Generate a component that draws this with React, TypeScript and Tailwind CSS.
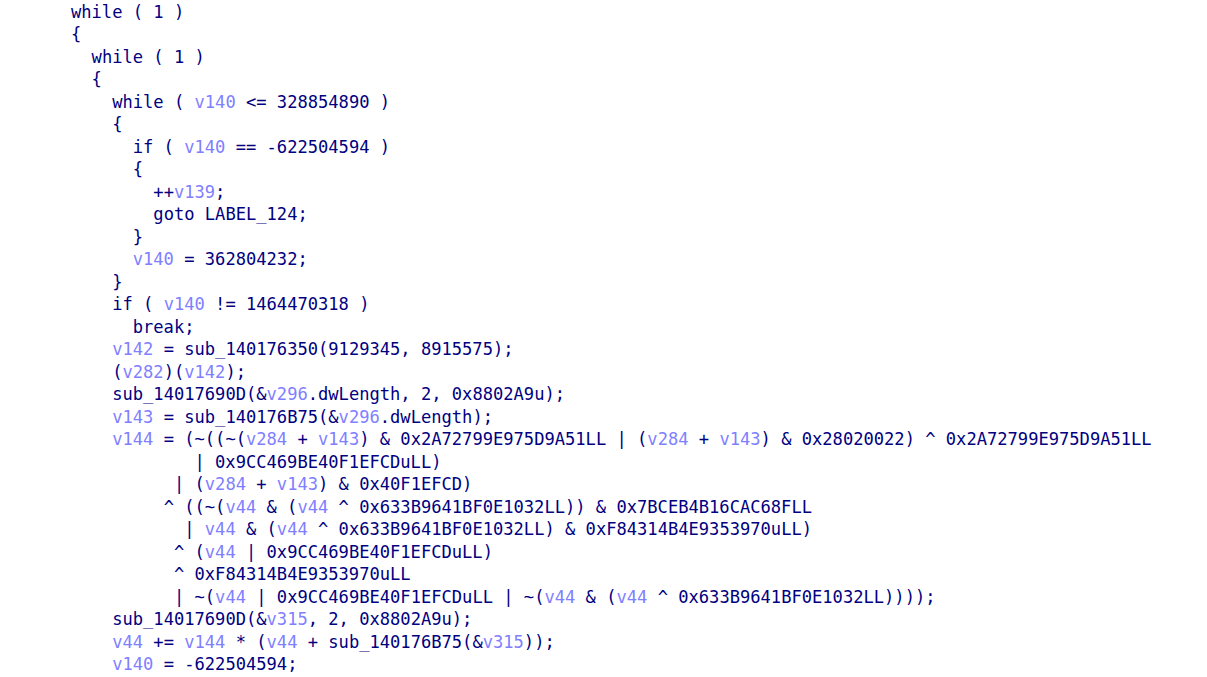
import React from "react";

// [indent columns, text]
const lines: [number, string][] = [
  [0, "while ( 1 )"],
  [0, "{"],
  [2, "while ( 1 )"],
  [2, "{"],
  [4, "while ( v140 <= 328854890 )"],
  [4, "{"],
  [6, "if ( v140 == -622504594 )"],
  [6, "{"],
  [8, "++v139;"],
  [8, "goto LABEL_124;"],
  [6, "}"],
  [6, "v140 = 362804232;"],
  [4, "}"],
  [4, "if ( v140 != 1464470318 )"],
  [6, "break;"],
  [4, "v142 = sub_140176350(9129345, 8915575);"],
  [4, "(v282)(v142);"],
  [4, "sub_14017690D(&v296.dwLength, 2, 0x8802A9u);"],
  [4, "v143 = sub_140176B75(&v296.dwLength);"],
  [4, "v144 = (~((~(v284 + v143) & 0x2A72799E975D9A51LL | (v284 + v143) & 0x28020022) ^ 0x2A72799E975D9A51LL"],
  [12, "| 0x9CC469BE40F1EFCDuLL)"],
  [10, "| (v284 + v143) & 0x40F1EFCD)"],
  [9, "^ ((~(v44 & (v44 ^ 0x633B9641BF0E1032LL)) & 0x7BCEB4B16CAC68FLL"],
  [11, "| v44 & (v44 ^ 0x633B9641BF0E1032LL) & 0xF84314B4E9353970uLL)"],
  [10, "^ (v44 | 0x9CC469BE40F1EFCDuLL)"],
  [10, "^ 0xF84314B4E9353970uLL"],
  [10, "| ~(v44 | 0x9CC469BE40F1EFCDuLL | ~(v44 & (v44 ^ 0x633B9641BF0E1032LL))));"],
  [4, "sub_14017690D(&v315, 2, 0x8802A9u);"],
  [4, "v44 += v144 * (v44 + sub_140176B75(&v315));"],
  [4, "v140 = -622504594;"],
];

// split a line so local variables (v123) get their own colour
function Tokens({ text }: { text: string }) {
  const parts = text.split(/(\bv\d+\b)/);
  return (
    <>
      {parts.map((p, i) =>
        /^v\d+$/.test(p) ? (
          <span key={i} className="text-[#8080ff]">
            {p}
          </span>
        ) : (
          <span key={i}>{p}</span>
        )
      )}
    </>
  );
}

const App = () => {
  return (
    <div className="w-[1207px] h-[677px] overflow-hidden bg-white pl-[71px] pt-[1px]">
      <div
        className="whitespace-pre text-[#000080] text-[17.1px] leading-[22.48px]"
        style={{ fontFamily: '"DejaVu Sans Mono", monospace' }}
      >
        {lines.map(([indent, text], i) => (
          <div key={i}>
            {" ".repeat(indent)}
            <Tokens text={text} />
          </div>
        ))}
      </div>
    </div>
  );
};

export default App;
